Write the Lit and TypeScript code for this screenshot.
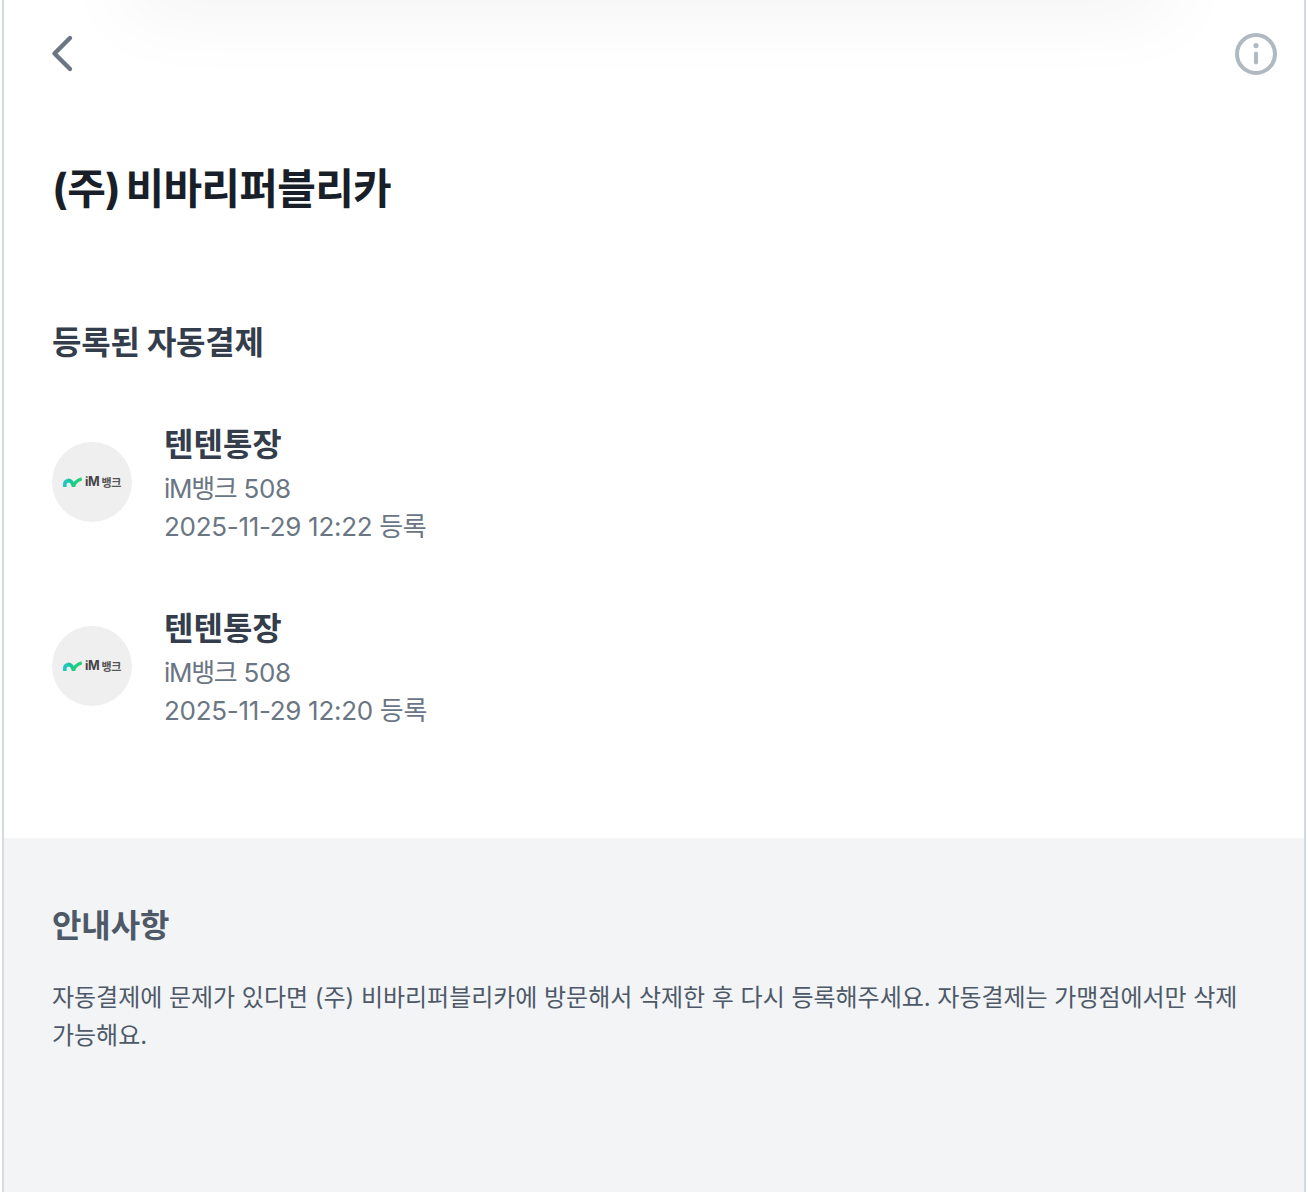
import { LitElement, html, css, svg } from "lit";
import { customElement } from "lit/decorators.js";

const items = [
  { name: "텐텐통장", bank: "iM뱅크", num: "508", date: "2025-11-29 12:22 등록" },
  { name: "텐텐통장", bank: "iM뱅크", num: "508", date: "2025-11-29 12:20 등록" },
];

@customElement("app-root")
export class AppRoot extends LitElement {
  static styles = css`
    :host { display: block; height: 1192px; overflow: hidden; padding: 0 2px; background: #fff; font-family: Inter, "Noto Sans CJK KR", sans-serif; }
    .frame { position: relative; height: 1192px; box-sizing: border-box; border-left: 2px solid #d5dae3; border-right: 2px solid #d5dae3; background: #fff; display: flex; flex-direction: column; overflow: hidden; }
    .shadow { position: absolute; top: -44px; left: 120px; right: 130px; height: 44px; border-radius: 40px; box-shadow: 0 5px 80px rgba(0,0,0,.075); }
    .top { height: 108px; display: flex; justify-content: space-between; align-items: flex-start; padding: 32px 26px 0 42px; box-sizing: border-box; }
    .top svg { display: block; }
    h1 { margin: 53px 0 0; padding: 0 48px; font-size: 42px; line-height: 56px; font-weight: 700; color: #191f28; letter-spacing: -0.7px; word-spacing: -4px; }
    h2 { margin: 104px 0 0; padding: 0 48px; font-size: 32px; line-height: 44px; font-weight: 700; color: #333d4b; letter-spacing: -0.25px; }
    .list { padding: 0 48px; margin-top: 58px; display: flex; flex-direction: column; gap: 61px; }
    .row { display: flex; align-items: center; gap: 32px; }
    .logo { width: 80px; height: 80px; border-radius: 50%; background: #efefef; display: flex; align-items: center; justify-content: center; flex: none; gap: 3px; margin-bottom: 6px; box-sizing: border-box; }
    .logo svg { display: block; }
    .logo b { font-size: 12.5px; font-weight: 700; color: #444; letter-spacing: -0.3px; display: flex; align-items: center; gap: 2px; }
    .logo i { font-style: normal; font-size: 11px; font-weight: 700; color: #555; letter-spacing: -0.3px; }
    .name { font-size: 32px; line-height: 44px; font-weight: 700; color: #333d4b; margin-bottom: 3px; }
    .sub { font-size: 26px; line-height: 38px; color: #6b7684; letter-spacing: -0.3px; }
    .bank { letter-spacing: -1.3px; }
    .notice { flex: 1; margin-top: 108px; background: #f2f4f6; padding: 61px 48px 0; }
    .notice h3 { margin: 0; font-size: 32px; line-height: 54px; font-weight: 700; color: #4e5968; letter-spacing: -0.1px; }
    .notice p { margin: 26px 0 0; font-size: 24px; line-height: 38px; color: #4e5968; word-break: keep-all; letter-spacing: -0.03px; }
  `;

  private mark() {
    return svg`<path d="M1.8 10 L1.8 7 Q2 4 6 3.6" fill="none" stroke="#25c6c0" stroke-width="3.6"/>
      <path d="M5 3.4 Q9 3.2 10.8 9.8" fill="none" stroke="#12c99a" stroke-width="3.6"/>
      <path d="M10.2 9.8 Q11.8 4 18.8 1.8" fill="none" stroke="#1ecf7f" stroke-width="3.4"/>`;
  }

  render() {
    return html`<div class="frame">
      <div class="shadow"></div>
      <div class="top">
        <svg width="28" height="44" viewBox="0 0 28 44"><path d="M24 6 L8.5 21.5 L24 37" fill="none" stroke="#6b7684" stroke-width="4.4" stroke-linecap="round" stroke-linejoin="round"/></svg>
        <svg width="44" height="44" viewBox="0 0 44 44"><circle cx="22" cy="22" r="19" fill="none" stroke="#b0b8c1" stroke-width="4"/><rect x="20" y="19.5" width="4" height="13" rx="2" fill="#b0b8c1"/><circle cx="22" cy="13.6" r="2.6" fill="#b0b8c1"/></svg>
      </div>
      <h1>(주) 비바리퍼블리카</h1>
      <h2>등록된 자동결제</h2>
      <div class="list">
        ${items.map((i) => html`<div class="row">
          <div class="logo"><svg width="19" height="10" viewBox="0 0 19 10">${this.mark()}</svg><b>iM<i>뱅크</i></b></div>
          <div><div class="name">${i.name}</div><div class="sub"><span class="bank">${i.bank}</span> ${i.num}</div><div class="sub">${i.date}</div></div>
        </div>`)}
      </div>
      <div class="notice">
        <h3>안내사항</h3>
        <p>자동결제에 문제가 있다면 (주) 비바리퍼블리카에 방문해서 삭제한 후 다시 등록해주세요. 자동결제는 가맹점에서만 삭제 가능해요.</p>
      </div>
    </div>`;
  }
}
